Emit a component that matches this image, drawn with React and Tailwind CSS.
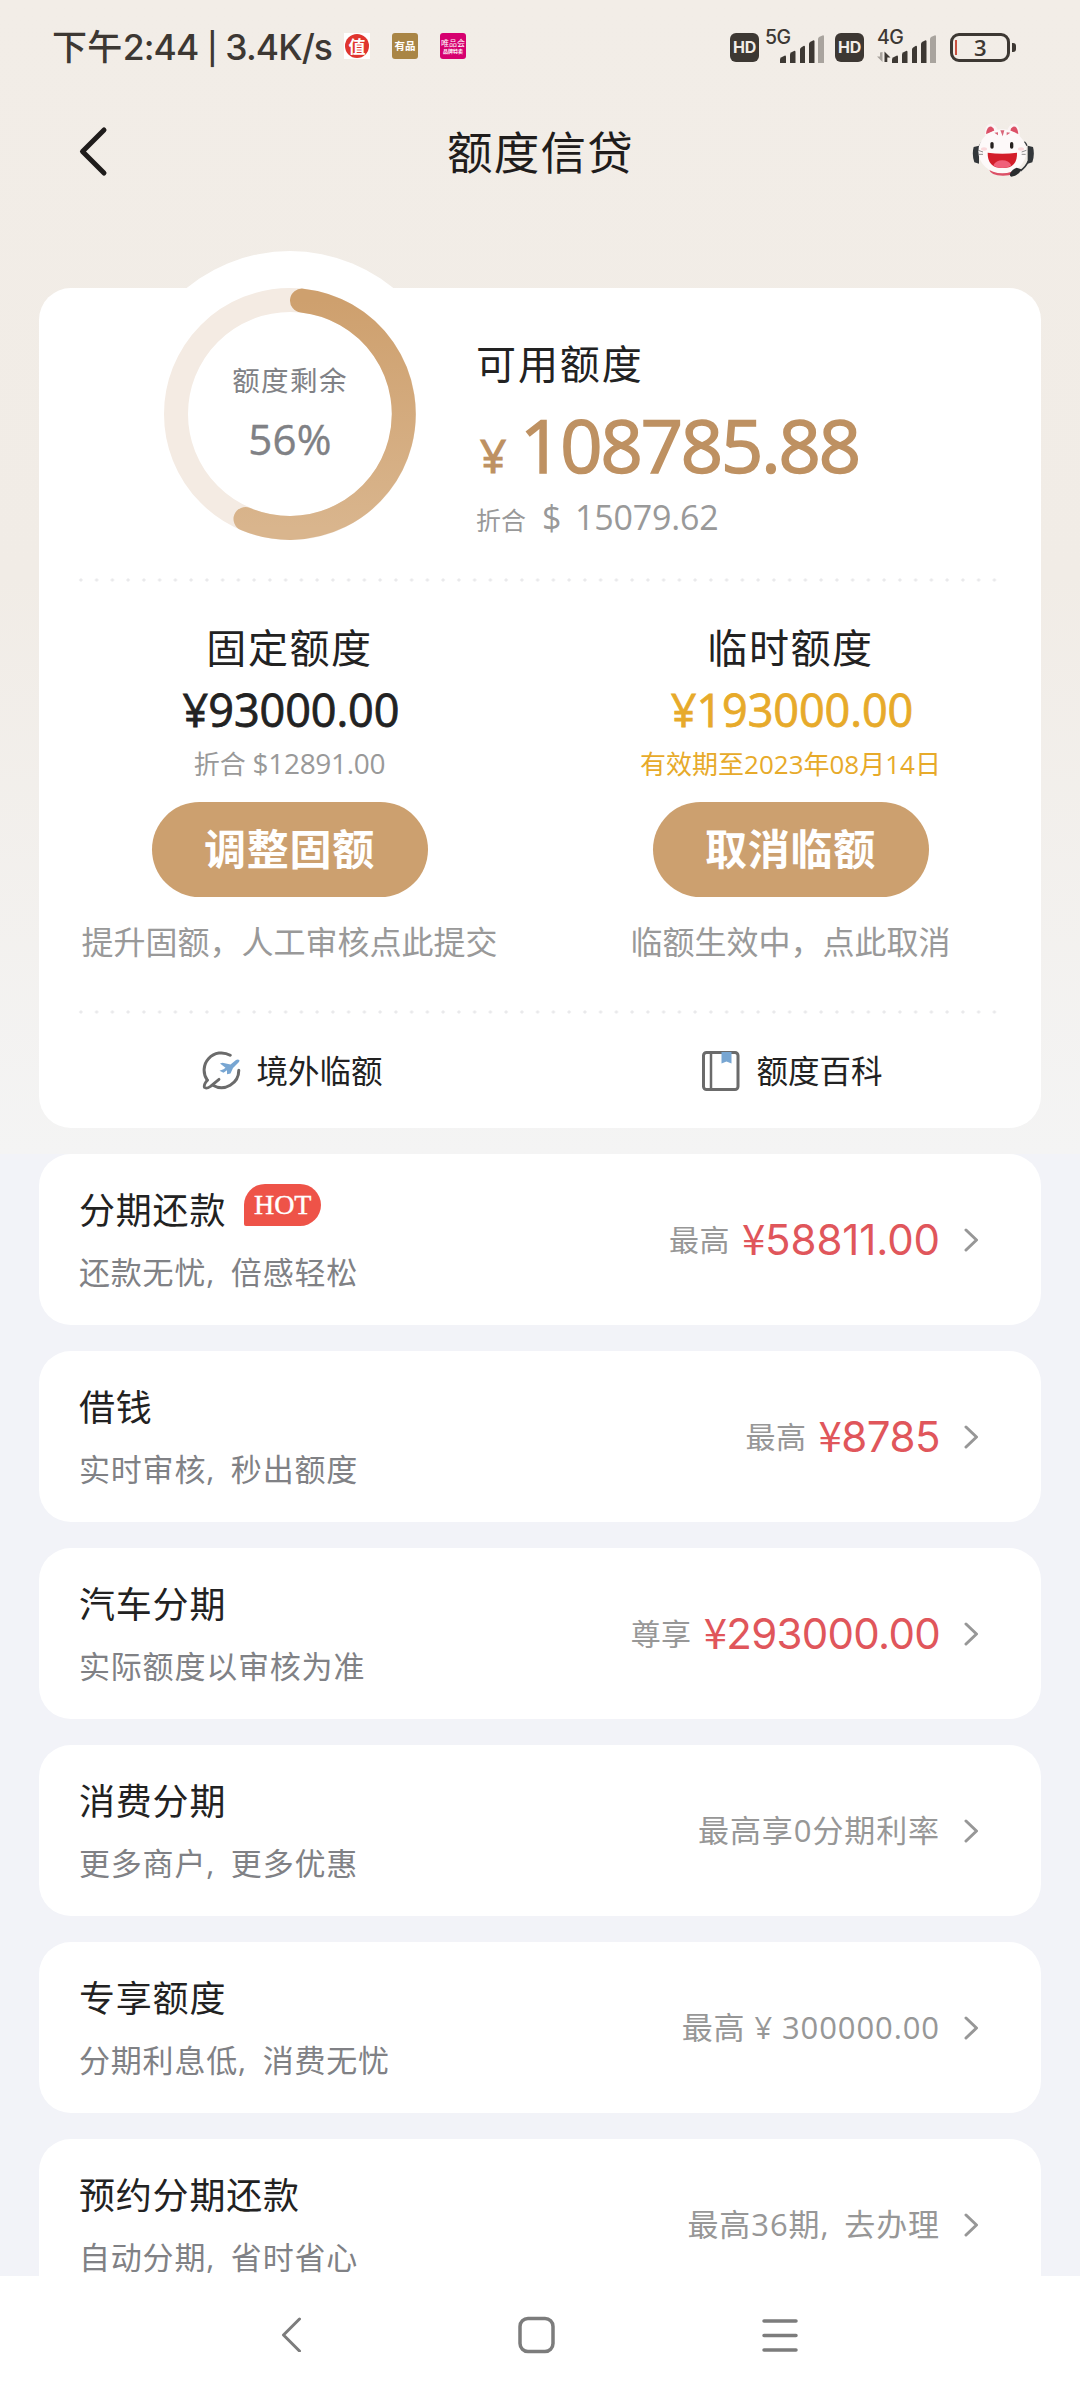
import React from 'react';
import clsx from 'clsx';

const products = [
  { title: '分期还款', desc: '还款无忧, 倍感轻松', label: '最高', amount: '58811.00', spacing: 'tracking-[-0.100px]', hot: true },
  { title: '借钱', desc: '实时审核, 秒出额度', label: '最高', amount: '8785', spacing: 'tracking-[-0.500px]' },
  { title: '汽车分期', desc: '实际额度以审核为准', label: '尊享', amount: '293000.00', spacing: 'tracking-[-0.700px]' },
  { title: '消费分期', desc: '更多商户, 更多优惠', note: '最高享0分期利率' },
  { title: '专享额度', desc: '分期利息低, 消费无忧', note: '最高 ¥ 300000.00' },
  { title: '预约分期还款', desc: '自动分期, 省时省心', note: '最高36期, 去办理' },
];

const HdBadge = () => (
  <span className="flex h-[29px] w-[29px] items-center justify-center rounded-[6px] bg-[#3d3833] font-['Inter',sans-serif] text-[16px] font-bold leading-none tracking-[-0.3px] text-[#f2ede7]">
    HD
  </span>
);

const Signal = ({ label, arrows }) => (
  <div className="relative h-8 w-[60px]">
    <span className="absolute left-0 -top-[2px] font-['Inter',sans-serif] text-[19.500px] font-medium leading-[16px] tracking-[-0.5px] text-[#3d3833]">
      {label}
    </span>
    <svg className="h-8 w-[60px]" viewBox="0 0 60 32" fill="#3d3833">
      <path d="M15 32v-3.500q0-1.500 1.500-2.300l3-1.500q1.500-.4 1.500 1v6.300z" />
      <path d="M25 32v-8.500q0-1.500 1.500-2.300l2.500-1.300q1.500-.4 1.500 1v11.100z" />
      <path d="M35 32v-13.500q0-1.500 1.500-2.300l2-1.300q1.500-.4 1.500 1v16.100z" />
      <path d="M44 32v-19q0-1.500 1.500-2.300l2.500-1.300q1.500-.4 1.500 1v21.600z" />
      <path d="M53 32v-24q0-1.500 1.500-2.300l3-1.300q1.500-.4 1.500 1v26.600z" fill="#a9a49e" />
      {arrows && (
        <>
          <path d="M5.500 21v10L0 25.500h3v-4z" fill="#a9a49e" />
          <path d="M7.500 31V20.500l6 6h-3.200V31z" />
        </>
      )}
    </svg>
  </div>
);

const StatusBar = () => (
  <div className="flex h-[94px] items-center pl-[52px] pr-[64px] text-[#3d3833]">
    <span className="whitespace-nowrap text-[35px] font-medium leading-none tracking-[0.35px]">
      下午
      <span className="font-['Inter',sans-serif] text-[35.500px] tracking-[-0.9px]">
        2:44 <span className="text-[31px]">|</span> 3.4K/s
      </span>
    </span>
    <div className="ml-auto flex items-center">
      <HdBadge />
      <div className="ml-[6px]">
        <Signal label="5G" />
      </div>
      <div className="ml-[10px]">
        <HdBadge />
      </div>
      <div className="ml-[13px]">
        <Signal label="4G" arrows />
      </div>
      <div className="ml-[13px] flex h-[29px] w-[60px] items-center justify-center rounded-[9px] border-[3px] border-[#3d3833] text-[22px] font-semibold leading-none">
        <i className="-ml-2 mr-[17px] h-[15px] w-[1.500px] bg-[#c8503f]" />3<i className="w-[10px]" />
      </div>
      <i className="ml-[2px] h-[9px] w-1 rounded-r-[3px] bg-[#3d3833]" />
    </div>
  </div>
);

const NoticeIcons = () => (
  <div className="absolute left-[344px] top-[33px] flex gap-[22px] text-white">
    <span className="flex h-[26px] w-[26px] items-center justify-center bg-white">
      <b className="flex h-6 w-6 items-center justify-center rounded-full bg-[#e0352f] text-[17px] leading-none">值</b>
    </span>
    <b className="flex h-[26px] w-[26px] items-center justify-center rounded-[3px] bg-[#a98545] text-[10.500px] leading-none">
      有品
    </b>
    <span className="flex h-[26px] w-[26px] flex-col items-center justify-center gap-[2px] whitespace-nowrap rounded-[3px] bg-[#d6006f] leading-none">
      <span className="text-[8px] leading-[8px]">唯品会</span>
      <span className="text-[5px] font-bold leading-[5px]">品牌特卖</span>
    </span>
  </div>
);

const CatService = () => (
  <svg className="-mt-[2px] h-[58px] w-[66px]" viewBox="36 18 198 174">
    <path d="M44 96q-6 22 2 46l14 4V92zM222 96q6 22-2 46l-14 4V92z" fill="#33373a" />
    <path d="M62 92q3-8 8-12M204 92q-3-8-8-12" fill="none" stroke="#33373a" strokeWidth="4" />
    <path d="M77 62Q78 22 100 27q14 5 16 22zM183 62q-1-40-22-35-14 5-16 22z" fill="#fbf4f4" />
    <path d="M81 57Q84 31 98 35q8 4 8 14zM178 57q-3-26-16-22-8 4-8 14z" fill="#dc5067" />
    <path d="M90 162h84q-3 20-42 20-38 0-42-20z" fill="#dc5067" />
    <ellipse cx="130" cy="109" rx="72" ry="66" fill="#fdf9f9" />
    <path d="M124 46h12l-5 18zM106 53l11-1 0 9zM154 53l-11-1 0 9z" fill="#d9667a" />
    <rect x="94" y="81" width="10" height="20" rx="5" fill="#26211f" />
    <rect x="153" y="81" width="10" height="20" rx="5" fill="#26211f" />
    <ellipse cx="75" cy="102" rx="9" ry="5" fill="#fbd9dc" />
    <ellipse cx="186" cy="102" rx="9" ry="5" fill="#fbd9dc" />
    <path d="M86 113q44 6 88 0 2 46-43 46-46 0-45-46z" fill="#d31d2a" />
    <path d="M103 151q8-15 27-15t27 15q-10 8-27 8t-27-8z" fill="#f0607a" />
    <path d="M58 106l14 5M60 118h12M202 106l-14 5M200 118h-12" stroke="#555" strokeWidth="2" />
    <path d="M208 138q-6 16-24 30" fill="none" stroke="#33373a" strokeWidth="5" />
    <path d="M153 176q6-14 20-18l14 5q-6 18-30 22-6-2-4-9z" fill="#2b2d2f" />
  </svg>
);

const Header = () => (
  <div className="flex h-[114px] items-center pl-[78px] pr-[43px]">
    <svg className="h-[52px] w-[68px]" viewBox="0 0 68 52" fill="none">
      <path d="M26 5L4.500 26.500 26 48" stroke="#1f1c1b" strokeWidth="5" strokeLinecap="round" strokeLinejoin="round" />
    </svg>
    <h1 className="-ml-[36px] flex-1 pt-1 text-center text-[45.500px] leading-none tracking-[1.200px] text-[#1f1c1b]">
      额度信贷
    </h1>
    <CatService />
  </div>
);

const DotLine = () => (
  <div className="mx-[34px] h-1 bg-[radial-gradient(circle,#e9e9eb_1.200px,transparent_2px)] bg-[length:15.750px_4px]" />
);

const QuotaRing = () => (
  <div className="relative -mt-[37px] ml-[88px] h-[326px] w-[326px]">
    <svg className="h-full w-full" viewBox="0 0 326 326" fill="none">
      <defs>
        <linearGradient id="ring" x1="0" y1="0" x2="0" y2="1">
          <stop offset="0" stopColor="#cea06e" />
          <stop offset="1" stopColor="#d9b58d" />
        </linearGradient>
      </defs>
      <circle cx="163" cy="163" r="163" fill="#fff" />
      <circle cx="163" cy="163" r="114" stroke="#f4ebe3" strokeWidth="24" />
      <path d="M175 49.600A114 114 0 1 1 118.500 268" stroke="url(#ring)" strokeWidth="24" strokeLinecap="round" />
    </svg>
    <div className="absolute inset-0 flex flex-col items-center pt-[112px] text-[#808185]">
      <span className="text-[27.500px] leading-9 tracking-[1.400px]">额度剩余</span>
      <span className="mt-[15px] text-[42px] leading-[50px] tracking-[0.200px] [-webkit-text-stroke:0.4px]">56%</span>
    </div>
  </div>
);

const QuotaColumn = ({ title, amount, extra, button, hint, temp }) => (
  <div className="flex flex-1 flex-col items-center whitespace-nowrap pt-[41px]">
    <h3 className="text-[40px] leading-[50px] tracking-[1.600px] text-[#222]">{title}</h3>
    <p
      className={clsx(
        'mt-[2px] pl-[3px] text-[45px] leading-[70px] tracking-[-0.100px] [-webkit-text-stroke:0.8px]',
        temp ? 'text-[#e7aa2a]' : 'text-[#222]'
      )}
    >
      ¥{amount}
    </p>
    <p className={clsx('h-10 text-[26px] leading-[38px]', temp ? 'text-[#e7aa2a]' : 'text-[#999]')}>{extra}</p>
    <button className="mt-[17px] h-[95px] w-[276px] rounded-full bg-[#cca06f] pb-[2px] text-[42px] font-bold tracking-[0.800px] text-white">
      {button}
    </button>
    <p className="mt-[22px] text-[32px] leading-[46px] text-[#999]">{hint}</p>
  </div>
);

const PlaneIcon = () => (
  <svg className="h-10 w-10" viewBox="0 0 40 40" fill="none" stroke="#6b6b6b" strokeWidth="3" strokeLinecap="round">
    <path d="M28.200 4.300A17.300 17.300 0 0 0 5.300 29.200" />
    <path d="M36.800 19.300A17.300 17.300 0 0 1 10.850 34.300" />
    <path d="M5.300 29.200q-4 5-2.800 7.300 2 1.500 6-1.200l8.500-7" strokeWidth="2.800" strokeLinejoin="round" />
    <path
      d="M18 12.500l2.500-.8 8 1.800 5.500-4.500q2-1 3.500.2 0 1.500-1.500 2.800l-5 5-2.500 5.500-3.500.8v-4l-3.500 2.500-4-2 4-1.500 2-1.500z"
      fill="#78a6d2"
      stroke="none"
    />
  </svg>
);

const BookIcon = () => (
  <svg className="h-10 w-[38px]" viewBox="0 0 38 40" fill="none">
    <rect x="1.500" y="1.500" width="34.500" height="37" rx="3" stroke="#6b6b6b" strokeWidth="3" />
    <path d="M9 2v36" stroke="#6b6b6b" strokeWidth="2.500" />
    <path d="M19.500 1h10v11.500l-5-2-5 2z" fill="#78a6d2" />
  </svg>
);

const QuotaCard = () => (
  <div className="mx-[39px] mt-[80px] flex h-[840px] flex-col rounded-[32px] bg-white">
    <div className="flex h-[290px] whitespace-nowrap">
      <QuotaRing />
      <div className="ml-[23px] pt-[49px]">
        <h2 className="text-[40px] leading-[54px] tracking-[1.900px] text-[#222]">可用额度</h2>
        <p className="mt-2 flex items-baseline leading-[92px] text-[#be9162]">
          <span className="ml-[4px] w-[40px] text-[46px] [-webkit-text-stroke:1.2px]">¥</span>
          <span className="text-[74px] tracking-[-2.100px] [-webkit-text-stroke:1.6px]">108785.88</span>
        </p>
        <p className="-mt-[7px] flex items-baseline text-[34px] leading-[46px] text-[#999]">
          <span className="w-[66px] text-[25px]">折合</span>
          <span className="w-[33px]">$</span>
          <span className="tracking-[-0.200px]">15079.62</span>
        </p>
      </div>
    </div>
    <DotLine />
    <div className="flex h-[428px]">
      <QuotaColumn
        title="固定额度"
        amount="93000.00"
        extra={
          <>
            折合 <span className="text-[28px] leading-none tracking-[-0.300px]">$12891.00</span>
          </>
        }
        button="调整固额"
        hint="提升固额，人工审核点此提交"
      />
      <QuotaColumn
        title="临时额度"
        amount="193000.00"
        extra="有效期至2023年08月14日"
        button="取消临额"
        hint="临额生效中，点此取消"
        temp
      />
    </div>
    <DotLine />
    <div className="flex flex-1 text-[31.500px] leading-none text-[#222]">
      <div className="flex flex-1 items-center justify-center pl-[5px]">
        <PlaneIcon />
        <span className="ml-[14px]">境外临额</span>
      </div>
      <div className="flex flex-1 items-center justify-center pl-[3px]">
        <BookIcon />
        <span className="ml-4">额度百科</span>
      </div>
    </div>
  </div>
);

const HotTag = () => (
  <span className="-mt-[10px] ml-[18px] flex h-[42px] w-[77px] items-center justify-center rounded-[21px] rounded-bl-[2px] bg-[#ee5348] font-['Liberation_Serif',serif] text-[28px] leading-none text-white [-webkit-text-stroke:0.4px]">
    HOT
  </span>
);

const ProductRow = ({ item }) => (
  <div className="flex h-[171px] shrink-0 items-center justify-between rounded-[32px] bg-white pl-10 pr-[62px]">
    <div>
      <div className="flex h-[52px] items-center">
        <h3 className="pt-[2px] text-[36px] leading-[52px] tracking-[0.800px] text-[#222]">{item.title}</h3>
        {item.hot && <HotTag />}
      </div>
      <p className="mb-2 mt-[21px] text-[31px] leading-[30px] tracking-[0.800px] text-[#808185] [word-spacing:7px]">
        {item.desc}
      </p>
    </div>
    <div className="flex items-center text-[30px] text-[#979797]">
      {item.note ? (
        <span className={clsx('text-[31px] tracking-[0.900px]', item.note.includes(',') && '[word-spacing:6px]')}>
          {item.note}
        </span>
      ) : (
        <>
          <span className="tracking-[0.500px]">{item.label}</span>
          <span
            className={clsx("ml-3 font-['Inter',sans-serif] text-[42px] leading-[52px] text-[#e0565b]", item.spacing)}
          >
            <span className="font-['Noto_Sans_CJK_SC',sans-serif] leading-none">¥</span>
            {item.amount}
          </span>
        </>
      )}
      <svg className="ml-6 h-6 w-[15px]" viewBox="0 0 15 24" fill="none">
        <path d="M2 2l10.500 10L2 22" stroke="#979797" strokeWidth="3" strokeLinecap="round" strokeLinejoin="round" />
      </svg>
    </div>
  </div>
);

const NavBar = () => (
  <div className="flex h-[124px] shrink-0 items-start justify-between bg-white pl-[280px] pr-[282px] pt-10">
    <svg className="h-9 w-[22px]" viewBox="0 0 22 36" fill="none">
      <path d="M19.500 3L3.500 19l16 16" stroke="#7c7c7c" strokeWidth="3" strokeLinecap="round" strokeLinejoin="round" />
    </svg>
    <svg className="ml-[5px] h-10 w-10" viewBox="0 0 40 40" fill="none">
      <rect x="5" y="2.500" width="33" height="33" rx="8" stroke="#7c7c7c" strokeWidth="3.500" />
    </svg>
    <svg className="h-10 w-9" viewBox="0 0 36 40" fill="none">
      <path d="M2 5h32M2 19.500h32M2 34h32" stroke="#7c7c7c" strokeWidth="3.500" strokeLinecap="round" />
    </svg>
  </div>
);

export default function App() {
  return (
    <div className="relative flex h-[2400px] w-[1080px] flex-col overflow-hidden bg-[#f2f3f8] font-['Open_Sans','Noto_Sans_CJK_SC',sans-serif]">
      <div className="h-[1154px] shrink-0 bg-[linear-gradient(#f2ede7_0,#f1ece6_50%,#f4f4f4_100%)]">
        <StatusBar />
        <NoticeIcons />
        <Header />
        <QuotaCard />
      </div>
      {/* the last card runs on under the nav bar */}
      <div className="mx-[39px] flex h-[1122px] shrink-0 flex-col gap-[26px]">
        {products.map((item) => (
          <ProductRow key={item.title} item={item} />
        ))}
      </div>
      <NavBar />
    </div>
  );
}
